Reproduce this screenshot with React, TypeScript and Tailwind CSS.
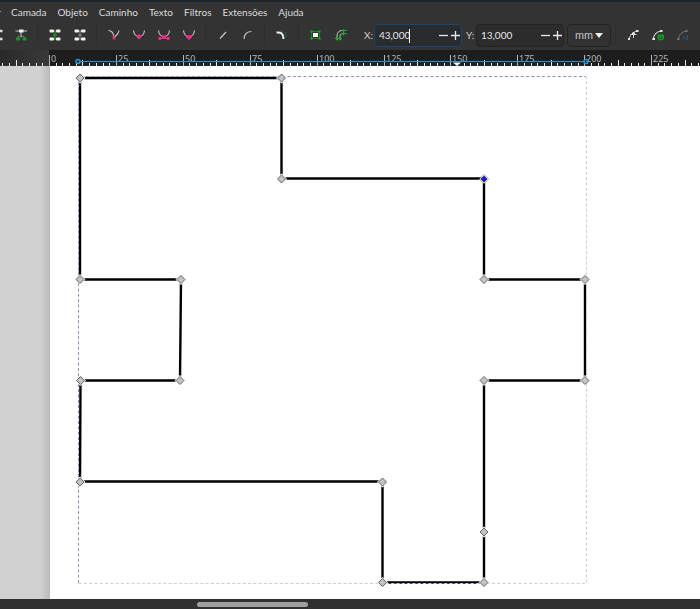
import type { ReactNode } from "react";

const menus = ["Camada", "Objeto", "Caminho", "Texto", "Filtros", "Extensões", "Ajuda"];

function ToolButton({ label, children }: { label: string; children: ReactNode }) {
  return (
    <button type="button" aria-label={label} className="flex h-[22px] w-[25px] shrink-0 items-center justify-center">
      <svg width="16" height="16" viewBox="0 0 16 16" fill="none">
        {children}
      </svg>
    </button>
  );
}

function Separator() {
  return <div className="mx-1 h-[22px] w-px shrink-0 bg-[#2e2e2e]" />;
}

function Squares() {
  return (
    <>
      <path d="M4.5 4H12M4.5 12H12" stroke="#8a8a8a" />
      <rect x="2.500" y="2.500" width="4.500" height="3" rx="1" fill="#f2f2f2" />
      <rect x="9" y="2.500" width="4.500" height="3" rx="1" fill="#f2f2f2" />
      <rect x="2.500" y="10.500" width="4.500" height="3" rx="1" fill="#f2f2f2" />
      <rect x="9" y="10.500" width="4.500" height="3" rx="1" fill="#f2f2f2" />
    </>
  );
}

function NodeCurve({ kind }: { kind: "cusp" | "smooth" | "symmetric" | "auto" }) {
  return (
    <>
      {kind === "cusp" ? (
        <path d="M2.500 3.500C5.500 3.500 7.500 6 8 10.500C9 9 12.500 8 13 3.500" stroke="#c8c8c8" strokeWidth="1.100" />
      ) : (
        <path d="M2.500 3.500C3 8 5.500 9.500 8 9.500S13 8 13.500 3.500" stroke="#c8c8c8" strokeWidth="1.100" />
      )}
      {kind === "cusp" && <path d="M8 8.500l2 2.500-2 2-2-2z" fill="#ee2a8c" />}
      {kind === "smooth" && <path d="M8 7l3 2.500-3 3-3-3z" fill="#ee2a8c" />}
      {kind === "symmetric" && (
        <>
          <path d="M3 11.500h10" stroke="#ee2a8c" />
          <path d="M2.500 10h2.500v3H2.500zM6 8.500h4v3H6zM11 10h2.500v3H11z" fill="#ee2a8c" />
        </>
      )}
      {kind === "auto" && <path d="M5 8.500h6v2L8 13 5 10.500z" fill="#ee2a8c" />}
    </>
  );
}

function Coordinate({ id, label, value, focused }: { id: string; label: string; value: string; focused?: boolean }) {
  return (
    <div className="flex shrink-0 items-center gap-0.5">
      <label htmlFor={id} className="w-2 whitespace-nowrap text-[#cfcfcf]">
        {label}
      </label>
      <div
        className={`flex h-[23px] w-[88px] items-center rounded border pl-1 ${
          focused ? "border-[#1c4474] bg-[#2a2b2d]" : "border-[#232323] bg-[#2c2c2c]"
        }`}
      >
        <input id={id} defaultValue={value} className={`bg-transparent text-[#e6e6e6] outline-none ${focused ? "w-[30px]" : "w-9"}`} />
        {focused && <span className="h-[14px] w-px shrink-0 bg-white" />}
        <button type="button" aria-label={`Diminuir ${label}`} className="ml-auto flex h-full w-3 shrink-0 items-center justify-center">
          <svg width="9" height="9" viewBox="0 0 9 9">
            <path d="M0 4.500h9" stroke="#e8e8e8" strokeWidth="1.300" />
          </svg>
        </button>
        <button type="button" aria-label={`Aumentar ${label}`} className="flex h-full w-3 shrink-0 items-center justify-center">
          <svg width="9" height="9" viewBox="0 0 9 9">
            <path d="M0 4.500h9M4.500 0v9" stroke="#e8e8e8" strokeWidth="1.300" />
          </svg>
        </button>
      </div>
    </div>
  );
}

function Toolbar() {
  return (
    <div className="flex h-[26px] items-start overflow-hidden">
      <div className="-ml-[17px] flex shrink-0 items-center">
        <ToolButton label="Inserir nó">
          <path d="M11 4h3.500M11 12h3.500" stroke="#dedede" strokeWidth="2.500" />
        </ToolButton>
        <ToolButton label="Excluir nó">
          <path d="M2.500 4H14M8 4v6.500" stroke="#c8c8c8" />
          <path d="M6 2.500h4.500v3H6z" fill="#f2f2f2" />
          <path d="M3.500 12C4 10 6 9 8 9s4 1 4.500 3" stroke="#888" />
          <rect x="3" y="10.500" width="4" height="3" rx="1" fill="#169b22" />
          <rect x="9.500" y="10.500" width="4" height="3" rx="1" fill="#169b22" />
        </ToolButton>
        <Separator />
        <ToolButton label="Unir nós">
          <Squares />
          <path d="M8 4v8M6 8h4" stroke="#179b24" strokeWidth="1.300" />
        </ToolButton>
        <ToolButton label="Quebrar caminho">
          <Squares />
          <path d="M8 4v8M6 8h4" stroke="#8c8c8c" />
        </ToolButton>
        <Separator />
        <ToolButton label="Nó de canto">
          <NodeCurve kind="cusp" />
        </ToolButton>
        <ToolButton label="Nó suave">
          <NodeCurve kind="smooth" />
        </ToolButton>
        <ToolButton label="Nó simétrico">
          <NodeCurve kind="symmetric" />
        </ToolButton>
        <ToolButton label="Nó automático">
          <NodeCurve kind="auto" />
        </ToolButton>
        <Separator />
        <ToolButton label="Segmento reto">
          <path d="M5 11.500l6-6.500" stroke="#c8c8c8" strokeWidth="1.200" />
        </ToolButton>
        <ToolButton label="Segmento curvo">
          <path d="M4 12C4 8 6.500 4.500 11.500 4.500" stroke="#b8b8b8" strokeWidth="1.200" />
        </ToolButton>
        <Separator />
        <ToolButton label="Adicionar cantos">
          <path d="M7 4h3M11.500 5l1 5" stroke="#168a25" strokeDasharray="1.500 2" />
          <path d="M2.500 5.500C7 5 9.500 6.500 9.500 12" stroke="#f0f0f0" strokeWidth="2" />
        </ToolButton>
        <Separator />
        <ToolButton label="Objeto para caminho">
          <path d="M3.500 4.500h8v7h-8z" stroke="#17821f" />
          <path d="M5 6h5v4H5z" fill="#fff" />
          <path d="M2.500 3.500h2v2h-2zM10.500 3.500h2v2h-2zM2.500 10.500h2v2h-2zM10.500 10.500h2v2h-2z" fill="#1ca82a" />
        </ToolButton>
        <ToolButton label="Contorno para caminho">
          <path d="M4 13V9c0-3.500 2-5.500 5-5.500h4M7 13v-3c0-2.500 1-3.500 3-3.500h3" stroke="#c8c8c8" />
          <path d="M2 11.500h7M4 9.500v4M7 9.500v4M8.500 3.500h5M8.500 6.500h5M10.500 2v6.500" stroke="#1ca82a" strokeWidth="1.200" />
        </ToolButton>
      </div>
      <div className="ml-[11px] flex h-[23px] shrink-0 items-center gap-1 text-[10px]">
        <Coordinate id="coord-x" label="X:" value="43,000" focused />
        <Coordinate id="coord-y" label="Y:" value="13,000" />
        <div className="relative -ml-px">
          <select
            aria-label="Unidade"
            className="block h-[23px] w-11 appearance-none rounded border border-[#232323] bg-[#323232] pl-[7px] text-[11px] text-[#c4c4c4] outline-none"
          >
            <option>mm</option>
          </select>
          <svg className="pointer-events-none absolute right-2 top-[9px]" width="8" height="5" viewBox="0 0 8 5">
            <path d="M0 0h8L4 5z" fill="#efefef" />
          </svg>
        </div>
      </div>
      <div className="flex shrink-0 items-center">
        <Separator />
        <ToolButton label="Mostrar alças">
          <path d="M4 13C4.500 9 7 5 13 3.500M5.500 7.500h6M8.500 6v5" stroke="#c9c9c9" />
          <path d="M3 11h2v2H3zM7 5.500h3v2.500H7zM11 3h2.500v2H11z" fill="#e5e5e5" />
        </ToolButton>
        <ToolButton label="Mostrar máscara">
          <path d="M3 13C3.500 9 6 5 10.500 4" stroke="#d5d5d5" strokeWidth="1.200" />
          <path d="M2.500 11h2.500v2H2.500zM10 3h2.500v2H10z" fill="#e5e5e5" />
          <path d="M7.500 7.500H14V11c0 1.500-1.500 2.500-3.200 2.500S7.500 12.500 7.500 11z" fill="#179b24" />
          <path d="M9 9.500h1M11.500 9.500h1M9 11.500h3.500" stroke="#0c4d13" />
        </ToolButton>
        <ToolButton label="Mostrar recorte">
          <path d="M3 13C3.500 9 6 5 11.500 4" stroke="#75797b" />
          <path d="M2.500 11h2v2h-2zM10.500 3h2v2h-2z" fill="#75797b" />
          <path d="M7 8.500l5 4M12 8.500l-5 4M12.500 8v5" stroke="#28536a" />
        </ToolButton>
      </div>
    </div>
  );
}

const tickStep = 6.69;
const ticks = Array.from({ length: 106 }, (_, i) => i - 7);

function Ruler() {
  return (
    <div className="h-4 overflow-hidden bg-[#1d1d1d]">
      <svg width="700" height="16" viewBox="0 0 700 16" fontFamily='"Noto Sans", sans-serif' fontSize="9">
        <defs>
          <linearGradient id="ruler-edge">
            <stop offset="0" stopColor="#292929" />
            <stop offset="1" stopColor="#393939" />
          </linearGradient>
        </defs>
        <rect width="49" height="16" fill="url(#ruler-edge)" />
        <rect x="78" y="12" width="508" height="4" fill="#19262e" />
        {ticks.map((n) => {
          const x = Math.round(49 + n * tickStep) + 0.5;
          const major = n % 10 === 0;
          const top = major ? 5 : n % 5 === 0 ? 10 : 13;
          return <path key={n} d={`M${x} ${top}V16`} stroke={major ? "#b5b5b5" : "#e8e8e8"} />;
        })}
        {[0, 25, 50, 75, 100, 125, 150, 175, 200, 225].map((mm) => (
          <text key={mm} x={Math.round(51 + mm * 2.676)} y="12" fill="#b4b4b4">
            {mm}
          </text>
        ))}
        <path d="M80 11.500H585" stroke="#2b8fc4" strokeWidth="1.200" />
        <circle cx="78" cy="11.500" r="2" fill="none" stroke="#2b96cb" strokeWidth="1.500" />
        <circle cx="586" cy="11.500" r="2" fill="none" stroke="#2b96cb" strokeWidth="1.500" />
        <path d="M453 12.500h8l-4 3.500z" fill="#f5f5f5" />
      </svg>
    </div>
  );
}

const nodes = [
  [80, 78], [281.5, 78], [281.5, 179], [484, 279.5], [585, 279.5], [585, 380.5], [484, 380.5], [484, 532],
  [484, 582.5], [382.5, 582.5], [382.5, 482], [80, 482], [80.5, 380.5], [180, 380.5], [181, 279.5], [80, 279.5],
];

function Drawing() {
  return (
    <svg width="650" height="533" viewBox="50 66 650 533" fill="none" className="block">
      <path
        d="M80 78H281.500V178.500H484V279.500H585V380.500H484V582.500H382.500V481.500H80L80.500 380.500H180L181 279.500H80Z"
        stroke="#000"
        strokeWidth="2.400"
      />
      <g strokeDasharray="3 2.300">
        <path d="M78.500 583V76.500H586" stroke="#8f8dbd" />
        <path d="M78.500 583.500H586.500V77" stroke="#cfcbe0" />
      </g>
      {nodes.map(([x, y]) => (
        <g key={`${x}-${y}`} transform={`translate(${x} ${y})`}>
          <path d="M0 -5.500L5.500 0L0 5.500L-5.500 0Z" fill="#fff" />
          <path d="M0 -4L4 0L0 4L-4 0Z" fill="#c4c4c4" stroke="#55554d" strokeWidth="0.900" />
        </g>
      ))}
      <g transform="translate(484 179)">
        <path d="M0 -4.500L4.500 0L0 4.500L-4.500 0Z" fill="#fff" stroke="#8d8a62" strokeWidth="0.800" />
        <path d="M0 -3L3 0L0 3L-3 0Z" fill="#1c1cd8" stroke="#22228a" strokeWidth="0.800" />
      </g>
    </svg>
  );
}

export default function App() {
  return (
    <div className="flex h-screen flex-col overflow-hidden bg-[#333333] font-['Lato','Noto_Sans',sans-serif]">
      <div className="h-0.5 shrink-0 bg-[#1b242d]" />
      <nav className="flex h-[22px] shrink-0 items-center gap-[9px] pb-0.5 text-[10px] text-[#dcdcdc]">
        <svg width="2" height="8" viewBox="0 0 2 8">
          <path d="M0 3.500h1" stroke="#a0a0a0" />
        </svg>
        <div className="flex gap-[11px]">
          {menus.map((name) => (
            <button key={name} type="button">
              {name}
            </button>
          ))}
        </div>
      </nav>
      <div className="shrink-0">
        <Toolbar />
        <Ruler />
      </div>
      <main className="flex min-h-0 flex-1">
        <div className="w-[50px] shrink-0 bg-linear-to-r from-[#d1d1d1] from-80% to-[#bababa]" />
        <div className="min-w-0 flex-1 overflow-hidden bg-white">
          <Drawing />
        </div>
      </main>
      <footer className="flex h-[10px] shrink-0 items-center bg-[#303030] px-0.5">
        <div className="ml-[28%] h-[5px] w-[16%] rounded-full bg-[#a0a0a0]" />
      </footer>
    </div>
  );
}
